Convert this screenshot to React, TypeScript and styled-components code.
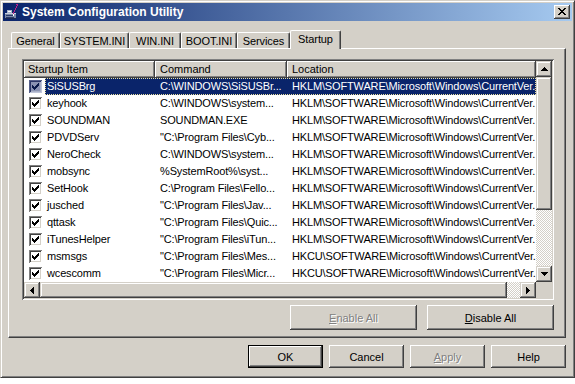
import React from 'react';
import styled, { createGlobalStyle, css } from 'styled-components';

const face = '#d4d0c8';
const shadow = '#808080';
const dark = '#404040';
const navy = '#0a246a';

const GlobalStyle = createGlobalStyle`
  html, body { margin: 0; padding: 0; background: #ffffff; }
  body { font-family: "Liberation Sans", Arial, sans-serif; font-size: 11px; color: #000; }
  * { box-sizing: border-box; }
`;

const pushRaised = css`
  background: ${face};
  box-shadow: inset -1px -1px ${dark}, inset 1px 1px #fff, inset -2px -2px ${shadow}, inset 2px 2px ${face};
`;

const scrollRaised = css`
  background: ${face};
  box-shadow: inset -1px -1px ${dark}, inset 1px 1px ${face}, inset -2px -2px ${shadow}, inset 2px 2px #fff;
`;

const Window = styled.div`
  width: 575px;
  height: 378px;
  background: ${face};
  border: 1px solid;
  border-color: ${face} ${dark} ${dark} ${face};
  box-shadow: inset 1px 1px #fff, inset -1px -1px ${shadow};
  padding: 2px;
  display: flex;
  flex-direction: column;
`;

const TitleBar = styled.div`
  height: 18px;
  flex: none;
  display: flex;
  align-items: center;
  gap: 2px;
  padding: 0 2px 0 1px;
  background: linear-gradient(to right, ${navy}, #a6caf0);
`;

const TitleText = styled.div`
  flex: 1;
  color: #fff;
  font-weight: bold;
  font-size: 12px;
  white-space: nowrap;
`;

const CloseButton = styled.div`
  width: 16px;
  height: 14px;
  ${pushRaised};
  display: flex;
  align-items: center;
  justify-content: center;
  padding-bottom: 1px;
`;

const Content = styled.div`
  flex: 1;
  display: flex;
  flex-direction: column;
  padding: 9px 6px 0 5px;
`;

const TabStrip = styled.div`
  display: flex;
  align-items: flex-end;
  height: 18px;
  padding-left: 3px;
`;

const Tab = styled.div<{ $w: number; $active?: boolean }>`
  width: ${(p) => p.$w}px;
  height: ${(p) => (p.$active ? 19 : 16)}px;
  margin-bottom: ${(p) => (p.$active ? -1 : 0)}px;
  position: relative;
  z-index: ${(p) => (p.$active ? 2 : 0)};
  background: ${face};
  border-top: 1px solid #fff;
  border-left: 1px solid #fff;
  border-right: 1px solid ${dark};
  border-radius: 2px 2px 0 0;
  box-shadow: inset -1px 0 ${shadow};
  display: flex;
  align-items: center;
  justify-content: center;
  padding-bottom: ${(p) => (p.$active ? 2 : 0)}px;
  white-space: nowrap;
  letter-spacing: -0.1px;
`;

const Panel = styled.div`
  height: 290px;
  flex: none;
  border: 1px solid;
  border-color: #fff ${dark} ${dark} #fff;
  box-shadow: inset -1px -1px ${shadow};
  padding: 10px 0 0 13px;
  display: flex;
  flex-direction: column;
  gap: 5px;
`;

const ListView = styled.div`
  width: 532px;
  height: 241px;
  padding: 2px;
  background: #fff;
  box-shadow: inset 1px 1px ${shadow}, inset -1px -1px #fff, inset 2px 2px ${dark}, inset -2px -2px ${face};
  display: grid;
  grid-template-columns: 512px 16px;
  grid-template-rows: 221px 16px;
`;

const ItemsArea = styled.div`
  overflow: hidden;
  display: flex;
  flex-direction: column;
`;

const Header = styled.div`
  display: grid;
  grid-template-columns: 131px 132px 249px;
  height: 17px;
  flex: none;
`;

const HeaderCell = styled.div<{ $pad: number }>`
  background: ${face};
  box-shadow: inset -1px -1px ${dark}, inset 1px 1px #fff, inset -2px -2px ${shadow};
  padding-left: ${(p) => p.$pad}px;
  line-height: 17px;
  white-space: nowrap;
  overflow: hidden;
`;

const Row = styled.div`
  display: flex;
  height: 17px;
  flex: none;
`;

const CheckCell = styled.div`
  width: 21px;
  flex: none;
  display: flex;
  align-items: center;
  padding-left: 5px;
`;

const CheckBox = styled.div<{ $sel?: boolean }>`
  width: 13px;
  height: 13px;
  background: ${(p) => (p.$sel ? '#8a93b3' : '#fff')};
  box-shadow: inset 1px 1px ${(p) => (p.$sel ? '#56608a' : shadow)}, inset -1px -1px ${(p) => (p.$sel ? '#c0c6da' : '#fff')},
    inset 2px 2px ${(p) => (p.$sel ? '#2a3566' : dark)}, inset -2px -2px ${(p) => (p.$sel ? '#a9b0c8' : face)};
  display: flex;
  align-items: center;
  justify-content: center;
`;

const RowContent = styled.div<{ $sel?: boolean }>`
  flex: 1;
  display: grid;
  grid-template-columns: 110px 132px 1fr;
  align-items: center;
  background: ${(p) => (p.$sel ? navy : 'transparent')};
  color: ${(p) => (p.$sel ? '#fff' : '#000')};
  outline: ${(p) => (p.$sel ? '1px dotted #e8e0a0' : 'none')};
  outline-offset: -1px;
  letter-spacing: -0.15px;
`;

const Cell = styled.div<{ $pad: number }>`
  padding-left: ${(p) => p.$pad}px;
  white-space: nowrap;
  overflow: hidden;
  line-height: 17px;
`;

const VScroll = styled.div`
  display: flex;
  flex-direction: column;
`;

const HScroll = styled.div`
  display: flex;
`;

const ScrollButton = styled.div`
  width: 16px;
  height: 16px;
  flex: none;
  ${scrollRaised};
  display: flex;
  align-items: center;
  justify-content: center;
`;

const Thumb = styled.div<{ $len: number; $vertical?: boolean }>`
  flex: none;
  ${(p) => (p.$vertical ? `height: ${p.$len}px;` : `width: ${p.$len}px;`)}
  ${scrollRaised};
`;

const Track = styled.div`
  flex: 1;
  background-color: ${face};
  background-image: conic-gradient(#fff 0 25%, ${face} 0 50%, #fff 0 75%, ${face} 0);
  background-size: 2px 2px;
`;

const Corner = styled.div`
  background: ${face};
`;

const ButtonRow = styled.div<{ $gap: number }>`
  display: flex;
  justify-content: flex-end;
  gap: ${(p) => p.$gap}px;
`;

const PanelButtons = styled(ButtonRow)`
  width: 532px;
`;

const BottomButtons = styled(ButtonRow)`
  margin-top: 7px;
`;

const Button = styled.div<{ $w: number; $h: number; $disabled?: boolean; $default?: boolean }>`
  width: ${(p) => p.$w}px;
  height: ${(p) => p.$h}px;
  display: flex;
  align-items: center;
  justify-content: center;
  color: ${(p) => (p.$disabled ? shadow : '#000')};
  text-shadow: ${(p) => (p.$disabled ? '1px 1px #fff' : 'none')};
  ${(p) =>
    p.$default
      ? css`
          background: ${face};
          border: 1px solid #000;
          box-shadow: inset -1px -1px ${dark}, inset 1px 1px #fff, inset -2px -2px ${shadow}, inset 2px 2px ${face};
        `
      : pushRaised}
  white-space: nowrap;
`;

const rows = [
  { name: 'SiSUSBrg', cmd: 'C:\\WINDOWS\\SiSUSBr...', loc: 'HKLM\\SOFTWARE\\Microsoft\\Windows\\CurrentVer.' },
  { name: 'keyhook', cmd: 'C:\\WINDOWS\\system...', loc: 'HKLM\\SOFTWARE\\Microsoft\\Windows\\CurrentVer.' },
  { name: 'SOUNDMAN', cmd: 'SOUNDMAN.EXE', loc: 'HKLM\\SOFTWARE\\Microsoft\\Windows\\CurrentVer.' },
  { name: 'PDVDServ', cmd: '"C:\\Program Files\\Cyb...', loc: 'HKLM\\SOFTWARE\\Microsoft\\Windows\\CurrentVer.' },
  { name: 'NeroCheck', cmd: 'C:\\WINDOWS\\system...', loc: 'HKLM\\SOFTWARE\\Microsoft\\Windows\\CurrentVer.' },
  { name: 'mobsync', cmd: '%SystemRoot%\\syst...', loc: 'HKLM\\SOFTWARE\\Microsoft\\Windows\\CurrentVer.' },
  { name: 'SetHook', cmd: 'C:\\Program Files\\Fello...', loc: 'HKLM\\SOFTWARE\\Microsoft\\Windows\\CurrentVer.' },
  { name: 'jusched', cmd: '"C:\\Program Files\\Jav...', loc: 'HKLM\\SOFTWARE\\Microsoft\\Windows\\CurrentVer.' },
  { name: 'qttask', cmd: '"C:\\Program Files\\Quic...', loc: 'HKLM\\SOFTWARE\\Microsoft\\Windows\\CurrentVer.' },
  { name: 'iTunesHelper', cmd: '"C:\\Program Files\\iTun...', loc: 'HKLM\\SOFTWARE\\Microsoft\\Windows\\CurrentVer.' },
  { name: 'msmsgs', cmd: '"C:\\Program Files\\Mes...', loc: 'HKCU\\SOFTWARE\\Microsoft\\Windows\\CurrentVer.' },
  { name: 'wcescomm', cmd: '"C:\\Program Files\\Micr...', loc: 'HKCU\\SOFTWARE\\Microsoft\\Windows\\CurrentVer.' },
];

const tabs = [
  { label: 'General', w: 49 },
  { label: 'SYSTEM.INI', w: 69 },
  { label: 'WIN.INI', w: 52 },
  { label: 'BOOT.INI', w: 56 },
  { label: 'Services', w: 53 },
  { label: 'Startup', w: 51, active: true },
];

const AppIcon = () => (
  <svg width="16" height="16" viewBox="0 0 16 16" shapeRendering="crispEdges">
    <rect x="1" y="9" width="11" height="6" fill="#7b8aa8" />
    <rect x="1" y="9" width="11" height="1" fill="#c8d0e0" />
    <rect x="2" y="11" width="8" height="1" fill="#2a3a6a" />
    <rect x="2" y="13" width="8" height="1" fill="#2a3a6a" />
    <rect x="1" y="14" width="11" height="1" fill="#1c2850" />
    <path d="M12 0h2v2h-1v2h-1v2h-1v2h-1v2h-1v-2h1v-2h1v-2h1v-2h1z" fill="#c0208a" />
    <rect x="9" y="10" width="1" height="2" fill="#fff" />
    <rect x="3" y="6" width="5" height="3" fill="#a8b4cc" />
    <rect x="4" y="7" width="3" height="1" fill="#fff" />
  </svg>
);

const CloseGlyph = () => (
  <svg width="8" height="7" viewBox="0 0 8 7" shapeRendering="crispEdges">
    <path
      d="M0 0h2v1h-2z M6 0h2v1h-2z M1 1h2v1h-2z M5 1h2v1h-2z M2 2h4v1h-4z M3 3h2v1h-2z M2 4h4v1h-4z M1 5h2v1h-2z M5 5h2v1h-2z M0 6h2v1h-2z M6 6h2v1h-2z"
      fill="#000"
    />
  </svg>
);

const CheckGlyph = ({ color }: { color: string }) => (
  <svg width="7" height="7" viewBox="0 0 7 7" shapeRendering="crispEdges">
    <path d="M0 2h1v3h-1z M1 3h1v3h-1z M2 4h1v3h-1z M3 3h1v3h-1z M4 2h1v3h-1z M5 1h1v3h-1z M6 0h1v3h-1z" fill={color} />
  </svg>
);

const Arrow = ({ dir }: { dir: 'up' | 'down' | 'left' | 'right' }) => {
  const vertical = dir === 'up' || dir === 'down';
  const d = {
    up: 'M3 0h1v1h1v1h1v1h1v1H0V3h1V2h1V1h1z',
    down: 'M0 0h7v1h-1v1h-1v1h-1v1h-1v-1h-1v-1h-1v-1h-1z',
    left: 'M3 0h1v7h-1v-1h-1v-1h-1v-1h-1v-1h1v-1h1v-1h1z',
    right: 'M0 0h1v1h1v1h1v1h1v1h-1v1h-1v1h-1v1h-1z',
  }[dir];
  return (
    <svg
      width={vertical ? 7 : 4}
      height={vertical ? 4 : 7}
      viewBox={vertical ? '0 0 7 4' : '0 0 4 7'}
      shapeRendering="crispEdges"
    >
      <path d={d} fill="#000" />
    </svg>
  );
};

export default function App() {
  return (
    <>
      <GlobalStyle />
      <Window>
        <TitleBar>
          <AppIcon />
          <TitleText>System Configuration Utility</TitleText>
          <CloseButton>
            <CloseGlyph />
          </CloseButton>
        </TitleBar>
        <Content>
          <TabStrip>
            {tabs.map((t) => (
              <Tab key={t.label} $w={t.w} $active={t.active}>
                {t.label}
              </Tab>
            ))}
          </TabStrip>
          <Panel>
            <ListView>
              <ItemsArea>
                <Header>
                  <HeaderCell $pad={4}>Startup Item</HeaderCell>
                  <HeaderCell $pad={5}>Command</HeaderCell>
                  <HeaderCell $pad={5}>Location</HeaderCell>
                </Header>
                {rows.map((r, i) => (
                  <Row key={r.name}>
                    <CheckCell>
                      <CheckBox $sel={i === 0}>
                        <CheckGlyph color={i === 0 ? '#0a1a4a' : '#000'} />
                      </CheckBox>
                    </CheckCell>
                    <RowContent $sel={i === 0}>
                      <Cell $pad={2}>{r.name}</Cell>
                      <Cell $pad={5}>{r.cmd}</Cell>
                      <Cell $pad={5}>{r.loc}</Cell>
                    </RowContent>
                  </Row>
                ))}
              </ItemsArea>
              <VScroll>
                <ScrollButton>
                  <Arrow dir="up" />
                </ScrollButton>
                <Thumb $len={133} $vertical />
                <Track />
                <ScrollButton>
                  <Arrow dir="down" />
                </ScrollButton>
              </VScroll>
              <HScroll>
                <ScrollButton>
                  <Arrow dir="left" />
                </ScrollButton>
                <Thumb $len={467} />
                <Track />
                <ScrollButton>
                  <Arrow dir="right" />
                </ScrollButton>
              </HScroll>
              <Corner />
            </ListView>
            <PanelButtons $gap={10}>
              <Button $w={127} $h={25} $disabled>
                <span>
                  <u>E</u>nable All
                </span>
              </Button>
              <Button $w={127} $h={25}>
                <span>
                  <u>D</u>isable All
                </span>
              </Button>
            </PanelButtons>
          </Panel>
          <BottomButtons $gap={6}>
            <Button $w={75} $h={23} $default>
              OK
            </Button>
            <Button $w={75} $h={23}>
              Cancel
            </Button>
            <Button $w={75} $h={23} $disabled>
              <span>
                <u>A</u>pply
              </span>
            </Button>
            <Button $w={75} $h={23}>
              Help
            </Button>
          </BottomButtons>
        </Content>
      </Window>
    </>
  );
}
